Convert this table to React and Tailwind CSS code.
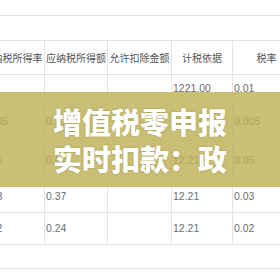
import React from "react";

const rows = [
  { h: "h-[28px]", c: ["", "", "", "1221.00", "0.01"] },
  { h: "h-[38px]", c: ["0.005", "0.12", "", "1221.00", "0.005"] },
  { h: "h-[40px]", c: ["0.05", "0.61", "", "12.21", "0.05"] },
  { h: "h-[32px]", c: ["0.03", "0.37", "", "12.21", "0.03"] },
  { h: "h-[32px]", c: ["0.02", "0.24", "", "12.21", "0.02"] },
];

const headers = ["应纳税所得率", "应纳税所得额", "允许扣除金额", "计税依据", "税率"];

export default function App() {
  return (
    <div className="relative w-[280px] h-[280px] overflow-hidden bg-white font-['Liberation_Sans','Noto_Sans_CJK_SC',sans-serif]">
      <div className="h-[16px] border-b border-[#e4e4e4]" />
      <div className="h-[25px] border-b border-[#e4e4e4]" />
      <div className="-ml-[19px] w-[320px]">
        <div className="grid grid-cols-[64px_63px_64px_61px_68px] h-[34px] border-b border-[#e4e4e4]">
          {headers.map((t, i) => (
            <div
              key={i}
              className="flex items-center justify-center border-r border-[#e4e4e4] text-[10px] text-[#555] whitespace-nowrap overflow-hidden font-['Noto_Sans_CJK_SC',sans-serif]"
            >
              {t}
            </div>
          ))}
        </div>
        {rows.map((r, ri) => (
          <div
            key={ri}
            className={`grid grid-cols-[64px_63px_64px_61px_68px] ${r.h} border-b border-[#e4e4e4]`}
          >
            {r.c.map((v, ci) => (
              <div
                key={ci}
                className="flex items-center pl-[1px] border-r border-[#e4e4e4] text-[10.5px] text-[#6e6e6e] whitespace-nowrap overflow-hidden"
              >
                {v}
              </div>
            ))}
          </div>
        ))}
      </div>
      <div className="h-[24px] border-b border-[#e4e4e4]" />

      <div className="absolute left-0 right-0 top-[92px] h-[95px] bg-[#bdb157]/[0.82] flex flex-col items-center justify-center">
        <div className="text-white font-black text-[29px] leading-[37px] tracking-[0px] font-['Noto_Sans_CJK_SC',sans-serif] [text-shadow:0_0_2px_rgba(120,110,40,0.5)]">
          增值税零申报
        </div>
        <div className="text-white font-black text-[29px] leading-[37px] tracking-[0px] font-['Noto_Sans_CJK_SC',sans-serif] [text-shadow:0_0_2px_rgba(120,110,40,0.5)]">
          实时扣款：政
        </div>
      </div>
    </div>
  );
}
